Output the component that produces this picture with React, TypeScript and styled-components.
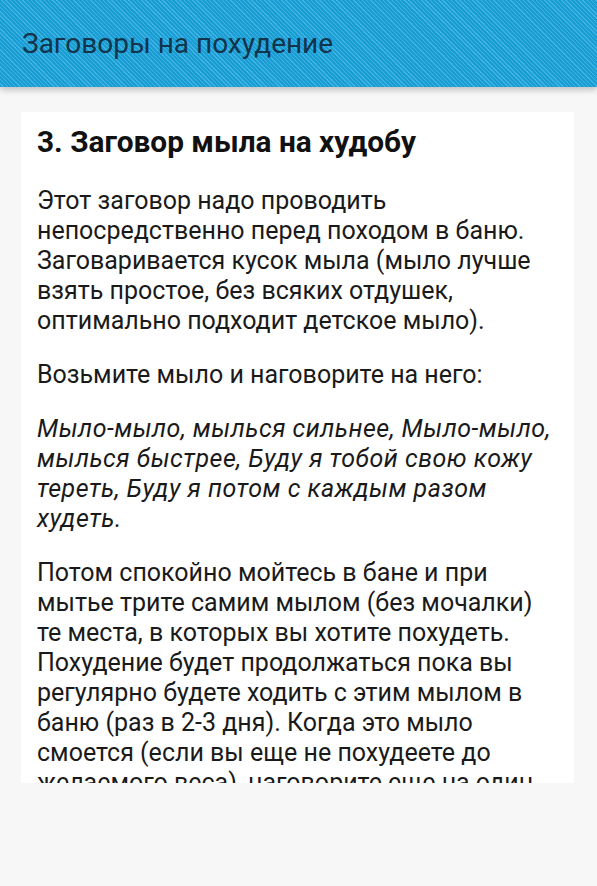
import styled, { createGlobalStyle } from "styled-components";

const GlobalStyle = createGlobalStyle`
  html, body {
    margin: 0;
    padding: 0;
    background-color: #f7f7f7;
  }
  * {
    box-sizing: border-box;
  }
`;

const paragraphs = [
  "Этот заговор надо проводить непосредственно перед походом в баню. Заговаривается кусок мыла (мыло лучше взять простое, без всяких отдушек, оптимально подходит детское мыло).",
  "Возьмите мыло и наговорите на него:",
];

const spell =
  "Мыло-мыло, мылься сильнее, Мыло-мыло, мылься быстрее, Буду я тобой свою кожу тереть, Буду я потом с каждым разом худеть.";

const after = [
  "Потом спокойно мойтесь в бане и при мытье трите самим мылом (без мочалки) те места, в которых вы хотите похудеть. Похудение будет продолжаться пока вы регулярно будете ходить с этим мылом в баню (раз в 2-3 дня). Когда это мыло смоется (если вы еще не похудеете до желаемого веса), наговорите еще на один кусок мыла и продолжайте.",
];

const App = () => {
  return (
    <Page>
      <GlobalStyle />
      <ActionBar>
        <AppTitle>Заговоры на похудение</AppTitle>
      </ActionBar>
      <Content>
        <Card>
          <Heading>3. Заговор мыла на худобу</Heading>
          {paragraphs.map((p) => (
            <Paragraph key={p}>{p}</Paragraph>
          ))}
          <Paragraph italic>{spell}</Paragraph>
          {after.map((p) => (
            <Paragraph key={p}>{p}</Paragraph>
          ))}
        </Card>
      </Content>
    </Page>
  );
};

const Page = styled.div`
  width: 597px;
  height: 886px;
  display: flex;
  flex-direction: column;
  background-color: #f7f7f7;
  font-family: Roboto, "Noto Sans", sans-serif;
`;

const ActionBar = styled.header`
  height: 87px;
  flex-shrink: 0;
  display: flex;
  align-items: center;
  padding: 0 22px;
  background-color: #1c9fd4;
  background-image: repeating-linear-gradient(
    45deg,
    #1a9dd2 0px,
    #1a9dd2 2px,
    #3eb2e2 2px,
    #3eb2e2 3px
  );
  box-shadow: 0 3px 6px rgba(0, 0, 0, 0.22);
  position: relative;
  z-index: 1;
`;

const AppTitle = styled.h1`
  margin: 0;
  font-size: 28px;
  font-weight: 400;
  color: #12344c;
`;

const Content = styled.main`
  padding: 25px 23px 0 21px;
`;

const Card = styled.article`
  height: 671px;
  overflow: hidden;
  background-color: #ffffff;
  padding: 12px 15px 0 16px;
`;

const Heading = styled.h2`
  margin: 0 0 26px;
  font-size: 29.8px;
  line-height: 36px;
  font-weight: 700;
  color: #111111;
`;

const Paragraph = styled.p<{ italic?: boolean }>`
  margin: 0 0 24px;
  font-size: 25px;
  line-height: 30px;
  color: #1a1a1a;
  font-style: ${(p) => (p.italic ? "italic" : "normal")};
  letter-spacing: ${(p) => (p.italic ? "0.5px" : "0")};
`;

export default App;
